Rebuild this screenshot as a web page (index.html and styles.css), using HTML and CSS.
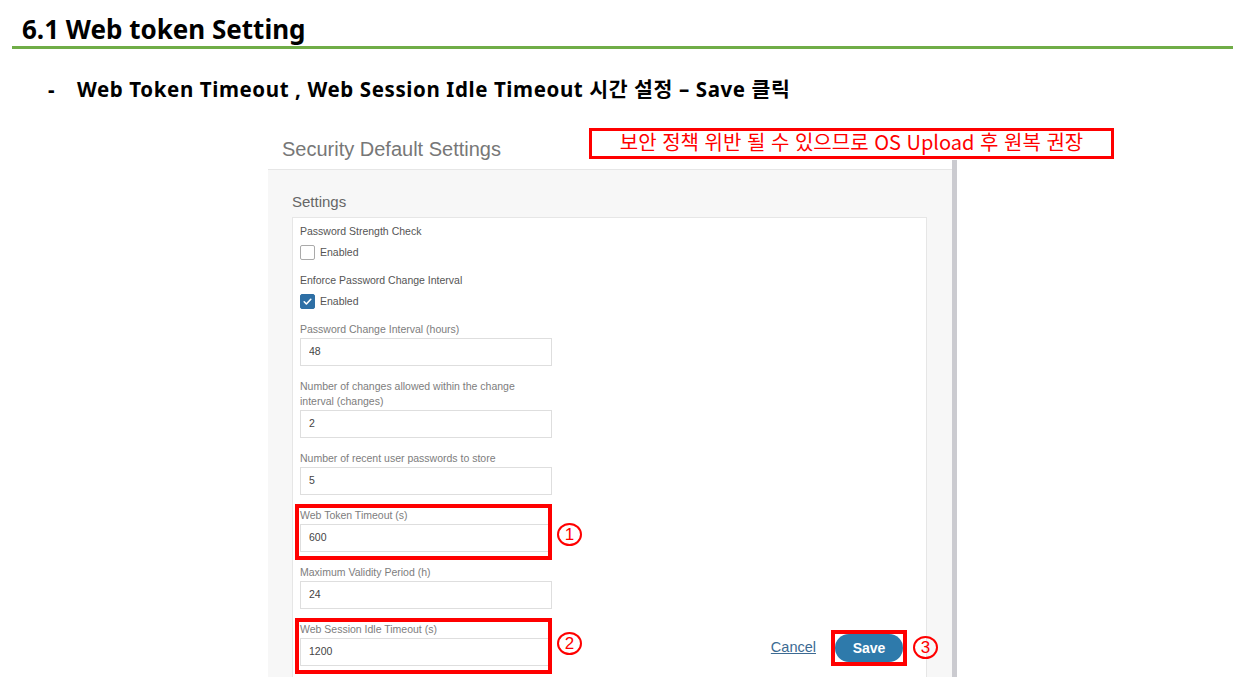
FILE: index.html
```html
<!DOCTYPE html>
<html lang="ko">
<head>
  <meta charset="UTF-8" />
  <meta name="viewport" content="width=device-width, initial-scale=1.0"/>
  <title>6.1 Web token Setting</title>
  <link rel="stylesheet" href="styles.css">
</head>
<body>
  <h1 class="doc-title">6.1 Web token Setting</h1>

  <p class="step">
    <span class="dash">-</span>
    <span>Web Token Timeout , Web Session Idle Timeout 시간 설정 – Save 클릭</span>
  </p>

  <div class="shot">
    <div class="shot-main">
      <div class="shot-head">
        <h2>Security Default Settings</h2>
      </div>

      <div class="shot-body">
        <h3>Settings</h3>

        <div class="card">
          <form class="form">
            <div class="field">
              <div class="label dark">Password Strength Check</div>
              <div class="check">
                <span class="box"></span>
                <span>Enabled</span>
              </div>
            </div>

            <div class="field">
              <div class="label dark">Enforce Password Change Interval</div>
              <div class="check">
                <span class="box on">
                  <svg width="13" height="13" viewBox="0 0 13 13"><polyline points="3.2,6.8 5.4,9 9.8,4.3" fill="none" stroke="#fff" stroke-width="1.6" stroke-linecap="round" stroke-linejoin="round"/></svg>
                </span>
                <span>Enabled</span>
              </div>
            </div>

            <div class="field">
              <label class="label">Password Change Interval (hours)</label>
              <input class="input" type="text" value="48">
            </div>

            <div class="field">
              <label class="label">Number of changes allowed within the change<br>interval (changes)</label>
              <input class="input" type="text" value="2">
            </div>

            <div class="field">
              <label class="label">Number of recent user passwords to store</label>
              <input class="input" type="text" value="5">
            </div>

            <div class="field marked">
              <label class="label">Web Token Timeout (s)</label>
              <input class="input" type="text" value="600">
              <span class="badge badge-one">1</span>
            </div>

            <div class="field">
              <label class="label">Maximum Validity Period (h)</label>
              <input class="input" type="text" value="24">
            </div>

            <div class="field marked last">
              <label class="label">Web Session Idle Timeout (s)</label>
              <input class="input" type="text" value="1200">
              <span class="badge badge-two">2</span>
            </div>
          </form>

          <div class="actions">
            <a class="cancel" href="#">Cancel</a>
            <span class="save-frame">
              <button class="save" type="button">Save</button>
              <span class="badge badge-three">3</span>
            </span>
          </div>
        </div>
      </div>
    </div>
    <div class="shot-scroll"></div>

    <div class="note">보안 정책 위반 될 수 있으므로 OS Upload 후 원복 권장</div>
  </div>
</body>
</html>
```

FILE: styles.css
```css
html, body {
  margin: 0;
  height: 677px;
  overflow: hidden;
  background: #fff;
}

body {
  font-family: "Noto Sans", "Noto Sans CJK KR", sans-serif;
  color: #000;
}

.doc-title {
  margin: 0 0 0 12px;
  padding: 12px 0 0 10px;
  font-size: 26px;
  line-height: 34px;
  font-weight: 700;
  border-bottom: 3px solid #70ad47;
}

.step {
  display: flex;
  margin: 28px 0 0;
  padding-left: 48px;
  font-size: 20.5px;
  line-height: 24px;
  font-weight: 700;
  letter-spacing: 0.6px;
}

.step .dash {
  width: 29px;
}

/* screenshot of the settings page */
.shot {
  position: relative;
  display: flex;
  width: 689px;
  margin: 24px 0 0 268px;
  font-family: "Liberation Sans", Arial, sans-serif;
}

.shot-main {
  width: 684px;
}

.shot-scroll {
  width: 5px;
  margin-top: 35px;
  background: #cbcbd0;
}

.shot-head {
  height: 45px;
  box-sizing: border-box;
  display: flex;
  align-items: flex-end;
  padding: 0 0 8px 14px;
  border-bottom: 1px solid #e6e6e6;
}

.shot-head h2 {
  margin: 0;
  font-size: 20px;
  line-height: 23px;
  font-weight: 400;
  color: #777;
}

.note {
  position: absolute;
  left: 321px;
  top: 3px;
  width: 525px;
  height: 31px;
  box-sizing: border-box;
  border: 3px solid #f00;
  color: #f00;
  font-family: "Noto Sans CJK KR", sans-serif;
  font-size: 20px;
  line-height: 21px;
  text-align: center;
}

.shot-body {
  background: #f7f7f7;
  padding: 23px 25px 20px 24px;
}

.shot-body h3 {
  margin: 0 0 6px;
  font-size: 15px;
  line-height: 18px;
  font-weight: 400;
  color: #666;
}

.card {
  display: flex;
  justify-content: space-between;
  align-items: flex-end;
  padding: 6px 19px 30px 7px;
  background: #fff;
  border: 1px solid #e6e6e6;
}

.form {
  width: 252px;
  margin: 0;
}

.field {
  position: relative;
  margin-bottom: 13px;
}

.field.last {
  margin-bottom: 0;
}

.label {
  display: block;
  font-size: 10.5px;
  line-height: 15px;
  color: #7d7d7d;
}

.label.dark {
  color: #555;
}

.check {
  display: flex;
  align-items: center;
  gap: 5px;
  margin-top: 6px;
  font-size: 10.5px;
  line-height: 15px;
  color: #555;
}

.box {
  display: flex;
  align-items: center;
  justify-content: center;
  width: 15px;
  height: 15px;
  box-sizing: border-box;
  border: 1px solid #aaa;
  border-radius: 2px;
  background: #fff;
}

.box.on {
  background: #2e6fa5;
  border-color: #2e6fa5;
}

.input {
  display: block;
  width: 100%;
  height: 28px;
  box-sizing: border-box;
  margin-top: 1px;
  padding: 0 8px 2px;
  border: 1px solid #dedede;
  border-radius: 0;
  background: #fff;
  font-family: inherit;
  font-size: 10.5px;
  color: #444;
  outline: none;
}

/* red annotation frames */
.field.marked::after {
  content: "";
  position: absolute;
  left: -5px;
  right: 0;
  top: -4px;
  bottom: -8px;
  border: 4px solid #f00;
  pointer-events: none;
}

.badge {
  position: absolute;
  width: 21px;
  height: 19px;
  border: 2px solid #f00;
  border-radius: 50%;
  color: #f00;
  font-size: 17px;
  line-height: 19px;
  font-weight: 400;
  text-align: center;
}

.badge-one {
  left: calc(100% + 5px);
  top: 15px;
}

.badge-two {
  left: calc(100% + 5px);
  top: 10px;
}

.badge-three {
  left: calc(100% + 10px);
  top: 2px;
}

.actions {
  display: flex;
  align-items: center;
  gap: 15px;
}

.cancel {
  font-size: 14.5px;
  color: #3c6a92;
  text-decoration: underline;
  margin-bottom: 3px;
}

.save-frame {
  position: relative;
  display: flex;
  border: 4px solid #f00;
}

.save {
  width: 68px;
  height: 28px;
  border: none;
  border-radius: 14px;
  background: #2e7aab;
  color: #fff;
  font-family: inherit;
  font-size: 14px;
  font-weight: 700;
  padding: 0;
}
```
